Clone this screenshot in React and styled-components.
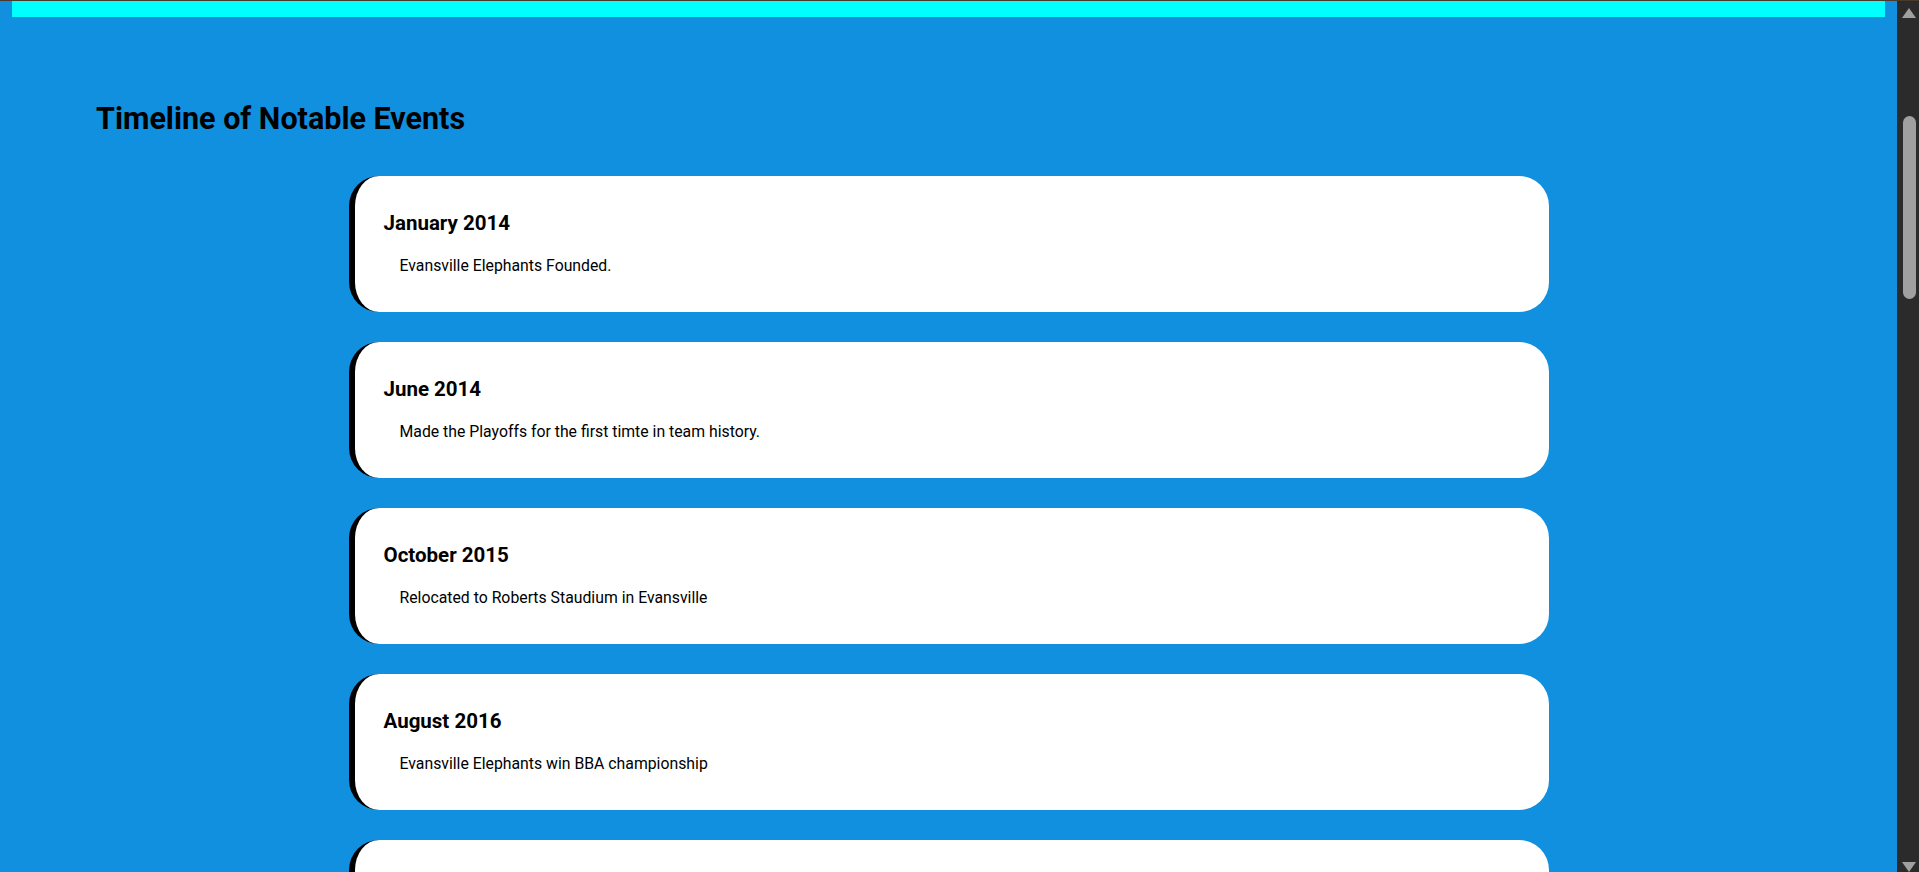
import React from "react";
import styled, { createGlobalStyle } from "styled-components";

const GlobalStyle = createGlobalStyle`
  body {
    margin: 0;
    height: 100vh;
    overflow: hidden;
    background: #1190df;
    border-top: 1px solid #4a3a2c;
    box-sizing: border-box;
    font-family: Roboto, "Liberation Sans", sans-serif;
    color: #000;
  }
`;

const Frame = styled.div`
  display: flex;
  height: calc(100vh - 1px);
`;

const Main = styled.main`
  flex: 1;
  overflow: hidden;
  padding-bottom: 60px;
`;

// stand-in for the browser scrollbar seen in the screenshot
const Rail = styled.div`
  width: 22px;
  flex-shrink: 0;
  background: #2b2b2b;
  display: flex;
  flex-direction: column;
  align-items: center;
`;

const Arrow = styled.div`
  width: 0;
  height: 0;
  margin-left: 2px;
  border-left: 7.5px solid transparent;
  border-right: 7.5px solid transparent;
  ${(p) =>
    p.$down
      ? `border-top: 10px solid #a0a0a0; margin-top: auto;`
      : `border-bottom: 10px solid #a0a0a0; margin-top: 7px;`}
`;

const Thumb = styled.div`
  width: 13px;
  height: 183px;
  margin: 98px 0 0 2px;
  border-radius: 7px;
  background: #a0a0a0;
`;

const TopBar = styled.div`
  height: 16px;
  margin: 0 12px;
  background: #00ffff;
`;

const Title = styled.h1`
  margin: 83px 0 0 96px;
  font-size: 30.5px;
  line-height: 37px;
  font-weight: 700;
`;

const Timeline = styled.ul`
  list-style: none;
  margin: 39px 0 0;
  padding: 0;
  display: flex;
  flex-direction: column;
  align-items: center;
  gap: 30px;
`;

const Card = styled.li`
  box-sizing: border-box;
  width: 1200px;
  padding: 35px 29px 36px;
  background: #fff;
  border-left: 6px solid #000;
  border-radius: 30px;
`;

const Date = styled.h3`
  margin: 0 0 19px;
  font-size: 20.5px;
  line-height: 25px;
  font-weight: 700;
`;

const Detail = styled.p`
  margin: 0 0 0 16px;
  font-size: 15.8px;
  line-height: 21px;
`;

const events = [
  { date: "January 2014", text: "Evansville Elephants Founded." },
  { date: "June 2014", text: "Made the Playoffs for the first timte in team history." },
  { date: "October 2015", text: "Relocated to Roberts Staudium in Evansville" },
  { date: "August 2016", text: "Evansville Elephants win BBA championship" },
  { date: "March 2017", text: "Evansville Elephants return to the Playoffs" },
];

export default function App() {
  return (
    <Frame>
      <GlobalStyle />
      <Main>
        <TopBar />
        <Title>Timeline of Notable Events</Title>
        <Timeline>
          {events.map((e) => (
            <Card key={e.date}>
              <Date>{e.date}</Date>
              <Detail>{e.text}</Detail>
            </Card>
          ))}
        </Timeline>
      </Main>
      <Rail>
        <Arrow />
        <Thumb />
        <Arrow $down />
      </Rail>
    </Frame>
  );
}
